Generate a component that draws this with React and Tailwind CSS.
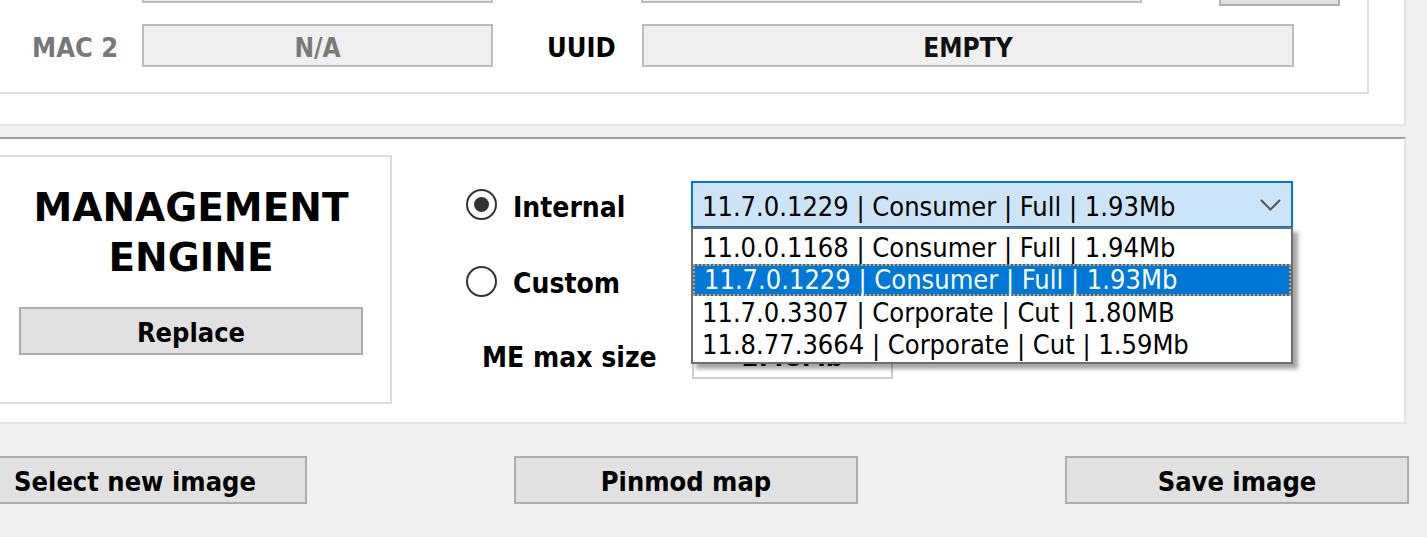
import React from 'react';

const versions = [
  '11.0.0.1168 | Consumer | Full | 1.94Mb',
  '11.7.0.1229 | Consumer | Full | 1.93Mb',
  '11.7.0.3307 | Corporate | Cut | 1.80MB',
  '11.8.77.3664 | Corporate | Cut | 1.59Mb',
];

const condensed = "font-['DejaVu_Sans_Condensed','DejaVu_Sans',sans-serif] font-stretch-condensed";

const Field = ({ className = '', children, muted }) => (
  <div
    className={`flex h-[43px] shrink-0 items-center justify-center border-2 border-[#bcbcbc] bg-[#efefef] pt-[5px] ${condensed} text-[26px] font-bold ${muted ? 'text-[#7a7a7a]' : 'text-[#111]'} ${className}`}
  >
    {children}
  </div>
);

const Button = ({ className = '', children }) => (
  <div
    className={`flex h-[48px] shrink-0 items-center justify-center border-2 border-[#adadad] bg-[#e1e1e1] pt-[4px] ${condensed} text-[27px] font-bold text-black ${className}`}
  >
    {children}
  </div>
);

const Radio = ({ checked, label }) => (
  <div className="flex items-center">
    <div className="flex h-[31px] w-[31px] items-center justify-center rounded-full border-2 border-[#333]">
      {checked && <div className="h-[15px] w-[15px] rounded-full bg-[#333]" />}
    </div>
    <span className={`ml-[16px] mt-[6px] ${condensed} text-[28px] font-bold text-black`}>{label}</span>
  </div>
);

const Chevron = () => (
  <svg width="21" height="12" viewBox="0 0 21 12" className="shrink-0">
    <polyline points="1,1 10.5,10.5 20,1" fill="none" stroke="#555" strokeWidth="2" />
  </svg>
);

const VersionCombo = () => (
  <div className="relative w-[602px]">
    <div className="flex h-[47px] items-center border-2 border-[#0078d7] bg-[#cce4f7] pl-[9px] pr-[10px]">
      <span className={`flex-1 pt-[6px] ${condensed} text-[27px] text-black`}>{versions[1]}</span>
      <Chevron />
    </div>
    {/* open list overlays the rows below */}
    <ul className="absolute left-0 top-[46px] z-10 w-[602px] border-2 border-[#6e6e6e] bg-white pb-[1px] pt-[2px] shadow-[5px_5px_4px_rgba(0,0,0,0.35)]">
      {versions.map((v, i) => (
        <li
          key={v}
          className={`flex h-[32.5px] items-center pl-[9px] pt-[1px] ${condensed} text-[27px] ${
            i === 1 ? 'border-2 border-dotted border-[#f29a4c] bg-[#0078d7] pl-[7px] text-white' : 'text-black'
          }`}
        >
          {v}
        </li>
      ))}
    </ul>
  </div>
);

export default function App() {
  return (
    <div className="flex h-[537px] w-[1427px] flex-col overflow-hidden bg-[#f0f0f0] font-['DejaVu_Sans',sans-serif]">
      {/* identity panel (scrolled, top cut off) */}
      <div className="flex h-[126px] w-[1406px] shrink-0 flex-col border-b-2 border-r-2 border-[#e3e3e3] bg-white">
        <div className="flex h-[94px] w-[1369px] flex-col border-b-2 border-r-2 border-[#dedede]">
          <div className="-mt-[42px] flex h-[47px] items-start">
            <Field className="ml-[142px] mt-[2px] w-[351px]" />
            <Field className="ml-[148px] mt-[2px] w-[501px]" />
            <Button className="ml-[77px] h-[47px] w-[121px]" />
          </div>
          <div className="mt-[18px] flex items-center">
            <span className={`ml-[32px] mt-[5px] w-[110px] ${condensed} text-[27px] font-bold text-[#777]`}>MAC 2</span>
            <Field className="w-[351px]" muted>N/A</Field>
            <span className={`ml-[54px] mt-[5px] w-[95px] ${condensed} text-[27px] font-bold text-black`}>UUID</span>
            <Field className="w-[652px]">EMPTY</Field>
          </div>
        </div>
      </div>

      {/* management engine panel */}
      <div className="mt-[11px] flex h-[287px] w-[1406px] shrink-0 border-b-2 border-r-2 border-t-2 border-b-[#e3e3e3] border-r-[#e3e3e3] border-t-[#a0a0a0] bg-white">
        <div className="-ml-[10px] mt-[16px] flex h-[249px] w-[402px] shrink-0 flex-col border-2 border-[#dcdcdc]">
          <div className="pt-[26px] text-center text-[39px] font-bold leading-[50px] text-black">
            MANAGEMENT
            <br />
            ENGINE
          </div>
          <Button className="ml-[27px] mt-[24px] w-[344px]">Replace</Button>
        </div>

        <div className="ml-[74px] mt-[42px] flex flex-col">
          <div className="flex h-[47px] items-center">
            <div className="w-[225px]">
              <Radio checked label="Internal" />
            </div>
            <VersionCombo />
          </div>
          <div className="mt-[30px] flex h-[46px] items-center">
            <Radio label="Custom" />
          </div>
          <div className="mt-[31px] flex h-[44px] items-center">
            <span className={`ml-[16px] mt-[2px] w-[210px] ${condensed} text-[28px] font-bold text-black`}>ME max size</span>
            <div className={`flex h-[44px] w-[201px] items-center justify-center border-2 border-[#cdcdcd] bg-white ${condensed} text-[27px] font-bold text-black`}>
              2.48Mb
            </div>
          </div>
        </div>
      </div>

      {/* actions */}
      <div className="mt-[32px] flex">
        <Button className="-ml-[37px] w-[344px]">Select new image</Button>
        <Button className="ml-[207px] w-[344px]">Pinmod map</Button>
        <Button className="ml-[207px] w-[344px]">Save image</Button>
      </div>
    </div>
  );
}
